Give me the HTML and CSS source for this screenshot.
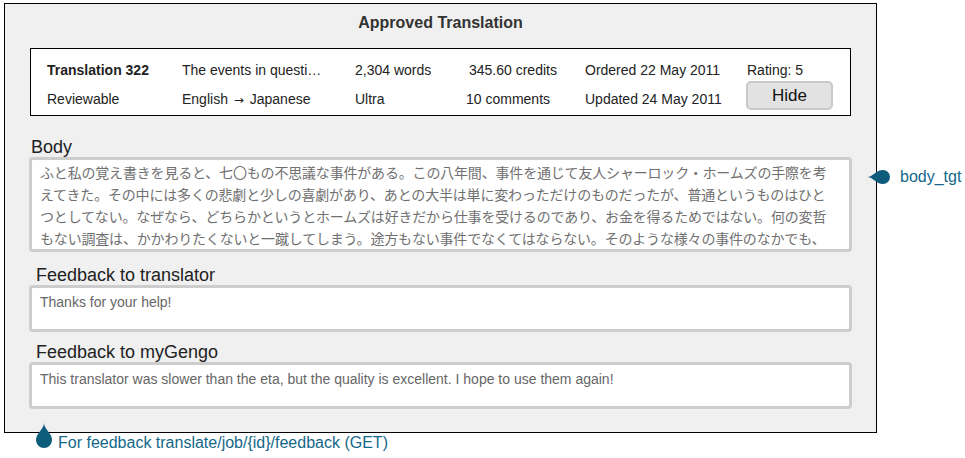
FILE: index.html
```html
<!DOCTYPE html>
<html lang="en">
<head>
<meta charset="utf-8">
<title>Approved Translation</title>
<link rel="stylesheet" href="styles.css">
</head>
<body>
<div class="page">
  <div class="panel">
    <h1 class="title">Approved Translation</h1>
    <div class="info">
      <div class="cell strong">Translation 322</div>
      <div class="cell">The events in questi…</div>
      <div class="cell">2,304 words</div>
      <div class="cell">345.60 credits</div>
      <div class="cell">Ordered 22 May 2011</div>
      <div class="cell">Rating: 5</div>
      <div class="cell">Reviewable</div>
      <div class="cell">English <span class="arrow">→</span> Japanese</div>
      <div class="cell">Ultra</div>
      <div class="cell shift">10 comments</div>
      <div class="cell">Updated 24 May 2011</div>
      <div class="cell"><button class="hide-btn">Hide</button></div>
    </div>

    <div class="label label-body">Body</div>
    <div class="field field-body">ふと私の覚え書きを見ると、七〇もの不思議な事件がある。この八年間、事件を通じて友人シャーロック・ホームズの手際を考えてきた。その中には多くの悲劇と少しの喜劇があり、あとの大半は単に変わっただけのものだったが、普通というものはひとつとしてない。なぜなら、どちらかというとホームズは好きだから仕事を受けるのであり、お金を得るためではない。何の変哲もない調査は、かかわりたくないと一蹴してしまう。途方もない事件でなくてはならない。そのような様々の事件のなかでも、</div>

    <div class="label label-fb1">Feedback to translator</div>
    <div class="field field-fb">Thanks for your help!</div>

    <div class="label label-fb2">Feedback to myGengo</div>
    <div class="field field-fb">This translator was slower than the eta, but the quality is excellent. I hope to use them again!</div>
  </div>

  <div class="note note-right">
    <svg class="pin" width="24" height="16" viewBox="0 0 24 16"><path d="M0 8 C6 8 9 1 16 1 A7 7 0 0 1 16 15 C9 15 6 8 0 8 Z" fill="#0e5c7c"/></svg>
    <span class="note-text">body_tgt</span>
  </div>
  <div class="note note-bottom">
    <svg class="pin" width="18" height="26" viewBox="0 0 18 26"><path d="M9 0 C9 6 1 10 1 17 A8 8 0 0 0 17 17 C17 10 9 6 9 0 Z" fill="#0e5c7c"/></svg>
    <span class="note-text">For feedback translate/job/{id}/feedback (GET)</span>
  </div>
</div>
</body>
</html>
```

FILE: styles.css
```css
html, body {
  margin: 0;
  padding: 0;
  background: #ffffff;
}

body {
  font-family: "Liberation Sans", Arial, sans-serif;
  color: #222;
}

.page {
  position: relative;
  width: 965px;
  height: 458px;
  padding: 3px 0 0 4px;
  box-sizing: border-box;
}

.panel {
  width: 871px;
  border: 1px solid #000;
  background: #f0f0f0;
  padding: 0 0 23px 0;
}

.title {
  margin: 10px 0 16px 0;
  font-size: 16px;
  line-height: 18px;
  font-weight: bold;
  text-align: center;
  color: #333;
}

.info {
  margin: 0 25px;
  border: 1px solid #000;
  background: #fff;
  display: grid;
  grid-template-columns: 135px 173px 114px 116px 162px 1fr;
  grid-template-rows: 16px 16px;
  row-gap: 13px;
  padding: 13px 0 8px 16px;
  box-sizing: border-box;
  height: 68px;
  font-size: 14px;
  line-height: 16px;
  color: #222;
}

.cell {
  white-space: nowrap;
}

.strong {
  font-weight: bold;
}

.shift {
  margin-left: -3px;
}

.arrow {
  font-family: "DejaVu Sans", sans-serif;
  font-size: 12px;
  margin: 0 2px;
}

.hide-btn {
  display: block;
  margin: -10px 0 0 -1px;
  width: 87px;
  height: 29px;
  box-sizing: border-box;
  border: 2px solid #c9c9c9;
  border-radius: 5px;
  background: #e2e2e2;
  font-family: "Liberation Sans", Arial, sans-serif;
  font-size: 17px;
  line-height: 22px;
  color: #111;
  padding: 0;
}

.label {
  font-size: 18px;
  line-height: 20px;
  color: #222;
}

.label-body {
  margin: 21px 0 0 26px;
}

.label-fb1 {
  margin: 13px 0 0 31px;
}

.label-fb2 {
  margin: 10px 0 0 31px;
}

.field {
  margin: 0 24px;
  border: 3px solid #cdcdcd;
  border-radius: 4px;
  background: #fff;
  color: #666;
  box-sizing: border-box;
  overflow: hidden;
}

.field-body {
  height: 95px;
  padding: 1px 13px 0 8px;
  font-family: "Noto Sans CJK JP", "Noto Sans", sans-serif;
  font-size: 14px;
  letter-spacing: -0.18px;
  line-height: 22px;
  color: #707070;
}

.field-fb {
  height: 47px;
  padding: 6px 8px 0 8px;
  font-size: 14px;
  line-height: 16px;
}

.note {
  position: absolute;
  display: flex;
  align-items: center;
  color: #14688a;
  font-size: 16px;
  line-height: 18px;
}

.note-right {
  left: 867px;
  top: 168px;
}

.note-right .note-text {
  margin-left: 9px;
}

.note-bottom {
  left: 35px;
  top: 423px;
  align-items: flex-end;
}

.note-bottom .note-text {
  margin-left: 5px;
  margin-bottom: -3px;
}

.pin {
  display: block;
  flex: none;
}
```
